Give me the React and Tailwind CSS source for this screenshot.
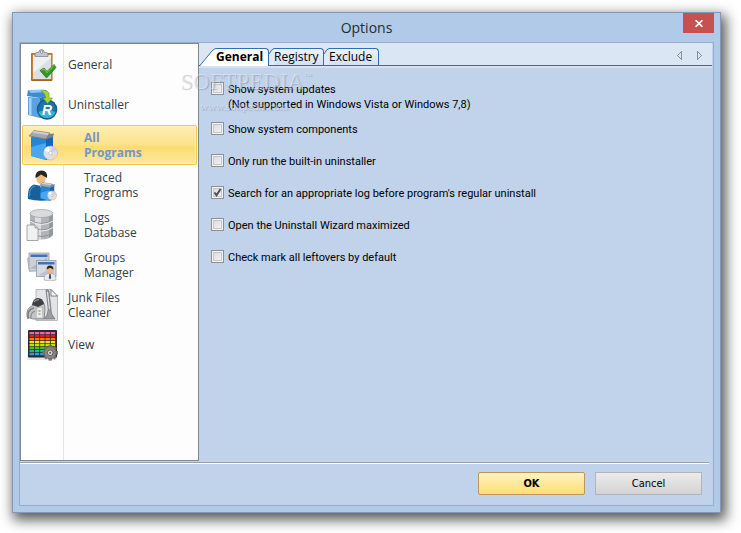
import React, { useState } from 'react';

const sections = [
  { id: 'general', lines: ['General'], icon: ClipboardIcon },
  { id: 'uninstaller', lines: ['Uninstaller'], icon: UninstallerIcon },
  { id: 'all', lines: ['All', 'Programs'], icon: ProgramsIcon, nested: true },
  { id: 'traced', lines: ['Traced', 'Programs'], icon: TracedIcon, nested: true },
  { id: 'logs', lines: ['Logs', 'Database'], icon: DatabaseIcon, nested: true },
  { id: 'groups', lines: ['Groups', 'Manager'], icon: GroupsIcon, nested: true },
  { id: 'junk', lines: ['Junk Files', 'Cleaner'], icon: JunkIcon },
  { id: 'view', lines: ['View'], icon: ViewIcon },
];

const tabs = ['General', 'Registry', 'Exclude'];

const initialOptions = [
  { id: 'updates', label: 'Show system updates', note: '(Not supported in Windows Vista or Windows 7,8)', checked: false },
  { id: 'components', label: 'Show system components', checked: false },
  { id: 'builtin', label: 'Only run the built-in uninstaller', checked: false },
  { id: 'log', label: "Search for an appropriate log before program's regular uninstall", checked: true },
  { id: 'wizard', label: 'Open the Uninstall Wizard maximized', checked: false },
  { id: 'leftovers', label: 'Check mark all leftovers by default', checked: false },
];

const App = () => {
  const [section, setSection] = useState('all');
  const [tab, setTab] = useState('General');
  const [options, setOptions] = useState(initialOptions);

  const toggle = (id) => {
    setOptions(options.map((o) => (o.id === id ? { ...o, checked: !o.checked } : o)));
  };

  return (
    <div className="flex min-h-screen bg-white pt-3 pl-3 pr-5 pb-5 font-['Open_Sans','Noto_Sans',sans-serif] text-black">
      <div className="flex flex-1 flex-col border border-[#7f9ab9] bg-[#b0cae8] px-1.5 pb-1.5 shadow-[3px_5px_12px_2px_rgba(0,0,0,0.65)]">
        {/* Title bar */}
        <header className="grid h-[29px] grid-cols-[31px_1fr_31px] items-start">
          <h1 className="col-start-2 text-center text-[14px] leading-[30px] text-[#262b33]">Options</h1>
          <button aria-label="Close" className="flex h-5 items-center justify-center bg-[#c75050]">
            <svg viewBox="0 0 8 7" className="h-[7px] w-2" stroke="#fff" strokeWidth="1.8">
              <path d="M0.6 0.2 L7.4 6.8 M7.4 0.2 L0.6 6.8" />
            </svg>
          </button>
        </header>

        <div className="flex flex-1 flex-col border border-[#95adcc] bg-[#c1d3ea]">
          <div className="flex flex-1">
            {/* Section list */}
            <nav className="flex w-[179px] shrink-0 flex-col border border-[#7e868f] bg-[linear-gradient(90deg,#ffffff_42px,#e2e4e9_42px,#e2e4e9_43px,#fdfdfd_43px)] pt-px">
              {sections.map((s) => (
                <SectionItem key={s.id} item={s} active={s.id === section} onClick={() => setSection(s.id)} />
              ))}
            </nav>

            {/* Tab page */}
            <main className="relative flex-1">
              <div className="mr-px border-b-2 border-[#d6e2f3] bg-[#dbe6f4]">
                <div className="flex h-[23px] items-end border-b border-[#2f6fb7]">
                  <div role="tablist" className="-mb-px flex">
                    {tabs.map((t) => (
                      <Tab key={t} label={t} first={t === tabs[0]} active={t === tab} onClick={() => setTab(t)} />
                    ))}
                  </div>
                  <div className="mr-2.5 mb-[5px] ml-auto flex gap-[15px]">
                    <button aria-label="Previous tab">
                      <svg viewBox="0 0 5 9" className="h-[9px] w-[5px]" fill="none" stroke="#8b8f96" shapeRendering="crispEdges">
                        <path d="M4.5 0.5 V8.5 L0.5 4.5 Z" />
                      </svg>
                    </button>
                    <button aria-label="Next tab">
                      <svg viewBox="0 0 5 9" className="h-[9px] w-[5px]" fill="none" stroke="#8b8f96" shapeRendering="crispEdges">
                        <path d="M0.5 0.5 V8.5 L4.5 4.5 Z" />
                      </svg>
                    </button>
                  </div>
                </div>
              </div>

              <div className="flex flex-col px-3 pt-3.5">
                {options.map((o) => (
                  <Option key={o.id} option={o} onChange={() => toggle(o.id)} />
                ))}
              </div>

              <Watermark />
            </main>
          </div>

          <hr className="mt-px mr-1 h-0.5 border-t border-b border-t-[#9a9fa8] border-b-white" />

          {/* Footer buttons */}
          <footer className="flex justify-end gap-2.5 px-[11px] pt-2 pb-2.5 font-['DejaVu_Sans_Condensed','DejaVu_Sans',sans-serif] text-[11px]">
            <button className="h-[23px] w-[107px] rounded-xs border border-[#bd9459] bg-linear-to-b from-[#fff3c0] to-[#ffdc73] pt-0.5 font-bold">
              OK
            </button>
            <button className="h-[23px] w-[107px] border border-[#b2b4b8] bg-linear-to-b from-[#ebebeb] to-[#d3d3d3] pt-0.5">
              Cancel
            </button>
          </footer>
        </div>
      </div>
    </div>
  );
};

const SectionItem = ({ item, active, onClick }) => {
  const Icon = item.icon;
  return (
    <button
      onClick={onClick}
      className={`mx-px flex h-10 items-center rounded-xs border pl-[3px] text-left text-[12px] leading-[15px] ${
        active
          ? 'border-[#efc64e] bg-[linear-gradient(#fdeeb4,#fce28a_50%,#fbdc70_55%,#fde99f)] font-bold text-[#7496c6] shadow-[inset_0_0_0_1px_#fef3c4]'
          : 'border-transparent text-[#333a48]'
      }`}
    >
      <svg viewBox="0 0 32 32" className="h-8 w-8 shrink-0">
        <Icon />
      </svg>
      <span className={`pb-px ${item.nested ? 'pl-[26px]' : 'pl-2.5'}`}>
        {item.lines.map((line) => (
          <span key={line} className="block">{line}</span>
        ))}
      </span>
    </button>
  );
};

const Tab = ({ label, first, active, onClick }) => (
  <button
    role="tab"
    aria-selected={active}
    onClick={onClick}
    className={`flex h-[18px] text-left font-['Open_Sans','Noto_Sans',sans-serif] text-[12px] leading-4 ${active ? 'font-bold' : ''}`}
  >
    {first ? (
      <svg viewBox="0 0 17 18" className="h-[18px] w-[17px]">
        <path d="M1 18 L13 3 Q15.5 0.5 17 0.5 V18 Z" fill={active ? '#fff' : '#dfe9f7'} />
        <path d="M1 17.5 L13 3 Q15.5 0.5 17 0.5" fill="none" stroke="#2f6fb7" />
      </svg>
    ) : (
      <svg viewBox="0 0 5 18" className="h-[18px] w-[5px]">
        <path d="M0 6 Q3 0.5 5 0.5 V17 H0 Z" fill={active ? '#fff' : '#dfe9f7'} />
        <path d="M0 6 Q3 0.5 5 0.5" fill="none" stroke="#2f6fb7" />
      </svg>
    )}
    <span
      className={`rounded-tr-sm border-t border-r border-[#2f6fb7] ${
        active ? 'h-[18px] bg-white' : 'h-[17px] bg-linear-to-b from-[#edf3fb] to-[#d3e1f3]'
      } ${first ? 'w-[53px]' : 'w-[50px]'}`}
    >
      {label}
    </span>
  </button>
);

const Option = ({ option, onChange }) => (
  <div className={`flex items-start gap-1 ${option.note ? 'h-10' : 'h-8'}`}>
    <span className="relative flex h-[13px] w-[13px]">
      <input
        id={option.id}
        type="checkbox"
        checked={option.checked}
        onChange={onChange}
        className="h-[13px] w-[13px] appearance-none border border-[#8e8f8f] bg-linear-to-br from-[#d5d9de] to-[#f6f6f6] shadow-[inset_0_0_0_1px_#f4f4f4,inset_0_0_0_2px_#c3c7cd]"
      />
      {option.checked && (
        <svg viewBox="0 0 13 13" className="pointer-events-none absolute inset-0" fill="none" stroke="#4a4f57" strokeWidth="2">
          <path d="M3.5 6.5 L5.5 9.2 L9.6 3" />
        </svg>
      )}
    </span>
    <label
      htmlFor={option.id}
      className="font-['Roboto','Noto_Sans',sans-serif] text-[11px] leading-[15px] whitespace-nowrap"
    >
      {option.label}
      {option.note && <span className="block">{option.note}</span>}
    </label>
  </div>
);

const Watermark = () => (
  <div className="pointer-events-none absolute top-[27px] -left-[19px] font-['Liberation_Serif',serif] text-white/40 [text-shadow:1px_1px_1px_rgba(90,100,120,0.35)]">
    <div className="flex items-start text-[23px] leading-6">
      SOFTPEDIA<span className="text-[8px] leading-3">™</span>
    </div>
    <div className="pt-1 pl-5 text-[11px] leading-4">www.softpedia.com</div>
  </div>
);

function ClipboardIcon() {
  return (
    <>
      <rect x="5" y="4" width="21.5" height="28" rx="1" fill="#a8641f" />
      <rect x="5.5" y="4.5" width="20.5" height="26" rx="1" fill="#c98336" />
      <path d="M7 6 H25 V30 H7 Z" fill="#eff0f2" />
      <path d="M7 24 L25 9 V30 H7 Z" fill="#dddfe3" />
      <path d="M9 7.5 V5 Q9 3.5 11 3.5 H12.5 Q13 0.5 15.5 0.5 T18.5 3.5 H20 Q22 3.5 22 5 V7.5 Z" fill="#c4c7cb" stroke="#777b80" strokeWidth="0.7" />
      <circle cx="15.5" cy="3" r="1.2" fill="#fff" stroke="#666" strokeWidth="0.6" />
      <path d="M14 21.5 L18 19 L21 22.5 L28 15.5 L30 18.5 L20.5 29 Z" fill="#2f9a21" stroke="#1c6d14" strokeWidth="0.7" />
      <path d="M15.5 21.5 L18 20 L21 23.7 L27.8 16.5" fill="none" stroke="#79d35d" strokeWidth="1" />
    </>
  );
}

function BlueBox() {
  return (
    <>
      <path d="M5 8 L20 10 V31 L5 27 Z" fill="#1f86dc" />
      <path d="M5 18 L20 14 V31 L5 27 Z" fill="#48a7f0" />
      <path d="M20 10 L27 7 V28 L20 31 Z" fill="#1566b5" />
      <path d="M5 8 L12 4 L27 7 L20 10 Z" fill="#3f5570" />
      <path d="M3 7 L8 1.5 L24 4 L20 10 Z" fill="#a3a8af" stroke="#6e747c" strokeWidth="0.6" />
      <path d="M8 2 L23 4.2 L21.5 6 L6.5 3.7 Z" fill="#cfd2d6" />
      <path d="M20 10 L23 5 L28 4.5 L27 8 Z" fill="#7c8289" />
    </>
  );
}

function Disc({ cx, cy, r }) {
  return (
    <>
      <circle cx={cx} cy={cy} r={r} fill="#dde1ea" stroke="#a6acb6" strokeWidth="0.6" />
      <path d={`M${cx} ${cy} L${cx - r * 0.9} ${cy - r * 0.4} A${r} ${r} 0 0 1 ${cx - r * 0.3} ${cy - r * 0.95} Z`} fill="#fff" />
      <path d={`M${cx} ${cy} L${cx + r * 0.9} ${cy + r * 0.4} A${r} ${r} 0 0 1 ${cx + r * 0.3} ${cy + r * 0.95} Z`} fill="#f5d9ae" />
      <path d={`M${cx} ${cy} L${cx + r * 0.3} ${cy - r * 0.95} A${r} ${r} 0 0 1 ${cx + r * 0.9} ${cy - r * 0.4} Z`} fill="#d6c8ee" />
      <circle cx={cx} cy={cy} r={r * 0.25} fill="#fff" stroke="#a6acb6" strokeWidth="0.6" />
    </>
  );
}

function UninstallerIcon() {
  return (
    <>
      <path d="M2 8 L14 9 V29 L2 26 Z" fill="#5ba2df" />
      <path d="M3 9 L5.5 9 V26.5 L3 26 Z" fill="#a8d3f5" />
      <path d="M14 9 L21 6 V26 L14 29 Z" fill="#2f71b5" />
      <path d="M1 7 L2 1 L8 2 L20 1 L22 6 L14 9 Z" fill="#3d8bd0" />
      <path d="M2 1 L18 0.5 L19 3 L5 4 Z" fill="#8fc5ee" />
      <circle cx="21" cy="20.5" r="10.3" fill="#155c8f" />
      <circle cx="21" cy="20.5" r="9" fill="#1b74a8" />
      <path d="M12.5 23 A9 9 0 0 0 29.5 23 Q21 19 12.5 23 Z" fill="#3fb0d6" />
      <text x="21" y="25.5" textAnchor="middle" fontSize="14" fontWeight="bold" fontStyle="italic" fill="#fff" fontFamily="Liberation Sans, sans-serif">R</text>
      <path d="M15 2 Q21 0.5 23 4 V9 H26.5 L21.5 14.5 L17 9 H19.5 Q20 4.5 15 2 Z" fill="#a5d436" stroke="#5f9a1b" strokeWidth="0.6" />
    </>
  );
}

function ProgramsIcon() {
  return (
    <>
      <BlueBox />
      <Disc cx={24.5} cy={24} r={7} />
    </>
  );
}

function TracedIcon() {
  return (
    <>
      <path d="M2 30 Q1 18 8 15.5 L15 17 L22 16 Q26 20 26 31 Q12 33 2 30 Z" fill="#17609b" />
      <path d="M3.5 27 Q3 19 9 17" fill="none" stroke="#4292cc" strokeWidth="1.2" />
      <path d="M11.5 13 L15 19 L18 13 Z" fill="#f5f5f5" />
      <ellipse cx="15" cy="9.5" rx="4.6" ry="5.5" fill="#f2bd85" />
      <path d="M9.5 9 Q9 1.5 15.5 1.5 T21 9 Q18 7 15 5.5 Q12 8 9.5 9 Z" fill="#2b2521" />
      <g transform="translate(11.5 12.5) scale(0.62)">
        <BlueBox />
      </g>
      <Disc cx={26} cy={26.5} r={4.5} />
    </>
  );
}

function DatabaseIcon() {
  return (
    <>
      <path d="M4 4.5 V26 Q8 30.5 15.5 30.5 T27 26 V4.5 Z" fill="#b2b4b7" />
      <path d="M9 6 H15 V30 Q11 30 9 29 Z" fill="#dcdddf" />
      <path d="M23 6 H27 V26 L23 29 Z" fill="#96999d" />
      <ellipse cx="15.5" cy="4.5" rx="11.5" ry="4" fill="#dadbdd" stroke="#a4a7aa" strokeWidth="0.8" />
      <path d="M4 11 Q15.5 18 27 11 M4 17.5 Q15.5 24.5 27 17.5 M4 24 Q15.5 31 27 24" fill="none" stroke="#8d9094" />
      <path d="M4 12 Q15.5 19 27 12 M4 18.5 Q15.5 25.5 27 18.5" fill="none" stroke="#f0f0f1" />
      <path d="M1 16 H9 L12 19 V31.5 H1 Z" fill="#f1f1f1" stroke="#8f9296" strokeWidth="0.8" />
      <path d="M9 16 V19 H12" fill="#d0d2d4" stroke="#8f9296" strokeWidth="0.7" />
    </>
  );
}

function GroupsIcon() {
  return (
    <>
      <path d="M1 9 L4 8 V21 L21 20 V22 L3 23 Z" fill="#b9bdc4" />
      <rect x="3" y="4" width="20" height="16" fill="#ccd1d9" stroke="#9ba2ac" strokeWidth="0.8" />
      <rect x="4.5" y="5.5" width="17" height="2.5" fill="#3f73b9" />
      <path d="M4.5 19 L21 9 V19 Z" fill="#b0b7c3" />
      <rect x="10.5" y="11.5" width="19.5" height="16" fill="#d5dae2" stroke="#8f97a3" strokeWidth="0.8" />
      <rect x="12" y="13" width="16.5" height="2.5" fill="#3f73b9" />
      <path d="M12 26.5 L28 17 V26.5 Z" fill="#bdc4cf" />
      <path d="M18 31 Q18 25 22 24.5 H26 Q30 25 30 31 Q24 33 18 31 Z" fill="#e9eaec" stroke="#9b9fa5" strokeWidth="0.6" />
      <path d="M23.3 25 H24.7 L25.2 29 L24 30.5 L22.8 29 Z" fill="#3f4d66" />
      <ellipse cx="24" cy="21" rx="2.7" ry="3.4" fill="#efb57a" />
      <path d="M20.7 20.5 Q20.5 16.5 24 16.5 T27.3 20.5 L24 18.7 Z" fill="#2a231f" />
    </>
  );
}

function JunkIcon() {
  return (
    <>
      <path d="M10 0.5 H25 L31.5 7 V31.5 H10 Z" fill="#e3e4e5" stroke="#a9abad" strokeWidth="0.8" />
      <path d="M25 0.5 V7 H31.5 Z" fill="#fff" stroke="#5d6063" strokeWidth="0.8" />
      <path d="M20 1 Q22 0 23 2 L25 20 Q25 25 27 27 L29 30 H18 L21 26 Q23 21 21.5 14 Z" fill="#9a9da0" stroke="#5e6164" strokeWidth="0.6" />
      <path d="M21.5 3 L23.5 20" stroke="#e8e9ea" strokeWidth="1" />
      <path d="M1 28 Q0 19 6 17 Q9 10 15 11 Q19 13 19 21 L18 30 H7 Z" fill="#c3c5c7" stroke="#6a6d70" strokeWidth="0.7" />
      <path d="M6 16 Q7 9 12 9 Q17 9 18 15 L12 18 Z" fill="#3f4245" />
      <path d="M8 13 Q10 10 13 11" fill="none" stroke="#a9acaf" strokeWidth="1.2" />
      <path d="M2 30 Q1 20 8 19" fill="none" stroke="#7b7e81" strokeWidth="1.6" />
      <path d="M5 30 Q4 24 9 22" fill="none" stroke="#8c8f92" strokeWidth="1.2" />
      <path d="M11 19 L16 18 L17 29 H10 Z" fill="#ececec" stroke="#a0a3a6" strokeWidth="0.5" />
      <path d="M12.5 22 H14.5" stroke="#d1463c" />
      <path d="M12.5 25 H14.5" stroke="#53a13f" />
    </>
  );
}

const swatchRows = ['#ff5fae', '#f01414', '#ff7a00', '#ffe600', '#b8e600', '#35d10c', '#1fb5a3', '#2d9be8'];

function ViewIcon() {
  const teeth = [0, 45, 90, 135, 180, 225, 270, 315];
  return (
    <>
      <rect x="1.5" y="26" width="29" height="5" rx="1" fill="#e2e3e5" />
      <rect x="2" y="1" width="29" height="27.5" rx="1" fill="#2c2730" />
      {swatchRows.map((color, row) =>
        [0, 1, 2, 3, 4].map((col) => (
          <rect key={`${row}-${col}`} x={3.5 + col * 5.3} y={3 + row * 3} width="4.5" height="2.3" fill={color} />
        ))
      )}
      {teeth.map((angle) => (
        <rect key={angle} x="22.5" y="16" width="3.4" height="4" fill="#76716f" transform={`rotate(${angle} 24.2 23.8)`} />
      ))}
      <circle cx="24.2" cy="23.8" r="6" fill="#8a8684" stroke="#6a6664" strokeWidth="0.8" />
      <circle cx="24.2" cy="23.8" r="2.8" fill="#d9d8d6" stroke="#4f4b49" strokeWidth="0.8" />
      <circle cx="24.2" cy="23.8" r="1" fill="#5c5856" />
    </>
  );
}

export default App;
